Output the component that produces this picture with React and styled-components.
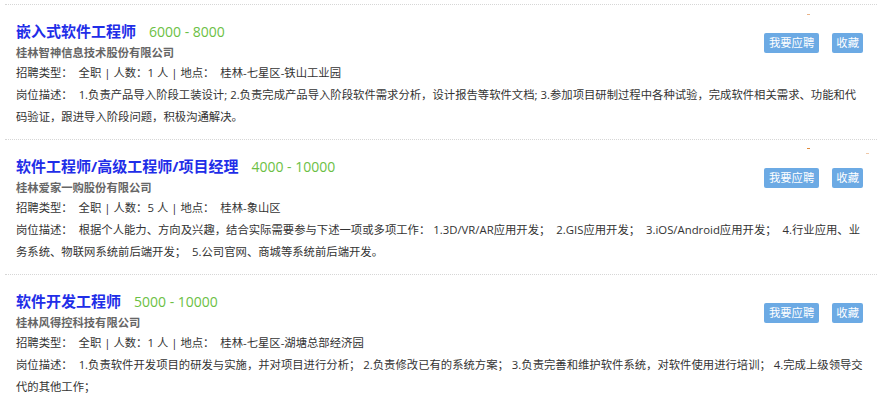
import React from 'react'
import styled, { createGlobalStyle } from 'styled-components'

const GlobalStyle = createGlobalStyle`
  body {
    margin: 0;
    background: #fff;
    font-family: "Open Sans", "Noto Sans CJK SC", sans-serif;
    color: #333;
  }
`

const JobList = styled.ul`
  list-style: none;
  margin: 0;
  padding: 4px 0 0 5px;
  width: 872px;
`

const JobItem = styled.li`
  position: relative;
  border-top: 1px dotted #d6d6d6;
  padding: 15px 12px 11px 11px;
`

const Head = styled.div`
  display: flex;
  justify-content: space-between;
  align-items: flex-start;
`

const Title = styled.h2`
  margin: 0;
  display: flex;
  align-items: baseline;
  line-height: 23px;
  font-size: 15px;
  font-weight: bold;
  color: #1f2ee8;
`

const Salary = styled.span`
  margin-left: 13px;
  font-size: 14px;
  font-weight: normal;
  color: #6cbf45;
`

const Company = styled.h3`
  margin: 0;
  line-height: 19px;
  font-size: 11.3px;
  font-weight: bold;
  color: #666;
`

const Actions = styled.div`
  display: flex;
  gap: 13px;
  margin-top: 13px;
  margin-right: 2px;
`

const ActionButton = styled.button`
  height: 20px;
  padding: 0 ${(p) => (p.$wide ? '5px' : '4px')};
  border: 0;
  border-radius: 2px;
  background: #6caae4;
  color: #fff;
  font-family: inherit;
  font-size: 11.35px;
  line-height: 20px;
  cursor: pointer;
`

const Line = styled.p`
  margin: 0;
  line-height: 22px;
  font-size: 11.35px;
  color: #333;
`

const Mark = styled.i`
  position: absolute;
  top: ${(p) => p.$top}px;
  left: ${(p) => p.$left}px;
  width: 3px;
  height: 1px;
  background: ${(p) => p.$color};
`

const jobs = [
  {
    title: '嵌入式软件工程师',
    salary: '6000 - 8000',
    company: '桂林智神信息技术股份有限公司',
    count: 1,
    place: '桂林-七星区-铁山工业园',
    desc: '1.负责产品导入阶段工装设计; 2.负责完成产品导入阶段软件需求分析，设计报告等软件文档; 3.参加项目研制过程中各种试验，完成软件相关需求、功能和代码验证，跟进导入阶段问题，积极沟通解决。',
    marks: [{ top: 9, left: 802, color: '#e9b48a' }],
  },
  {
    title: '软件工程师/高级工程师/项目经理',
    salary: '4000 - 10000',
    company: '桂林爱家一购股份有限公司',
    count: 5,
    place: '桂林-象山区',
    desc: '根据个人能力、方向及兴趣，结合实际需要参与下述一项或多项工作： 1.3D/VR/AR应用开发；\u00a0 2.GIS应用开发；\u00a0 3.iOS/Android应用开发；\u00a0 4.行业应用、业务系统、物联网系统前后端开发；\u00a0 5.公司官网、商城等系统前后端开发。',
    marks: [
      { top: 8, left: 802, color: '#e08a3a' },
      { top: 13, left: 861, color: '#f0c8a8' },
    ],
  },
  {
    title: '软件开发工程师',
    salary: '5000 - 10000',
    company: '桂林风得控科技有限公司',
    count: 1,
    place: '桂林-七星区-湖塘总部经济园',
    desc: '1.负责软件开发项目的研发与实施，并对项目进行分析； 2.负责修改已有的系统方案； 3.负责完善和维护软件系统，对软件使用进行培训； 4.完成上级领导交代的其他工作；',
    marks: [],
  },
]

const App = () => {
  return (
    <>
      <GlobalStyle />
      <JobList>
        {jobs.map((job) => (
          <JobItem key={job.title}>
            {job.marks.map((m, i) => (
              <Mark key={i} $top={m.top} $left={m.left} $color={m.color} />
            ))}
            <Head>
              <div>
                <Title>
                  {job.title}
                  <Salary>{job.salary}</Salary>
                </Title>
                <Company>{job.company}</Company>
              </div>
              <Actions>
                <ActionButton $wide>我要应聘</ActionButton>
                <ActionButton>收藏</ActionButton>
              </Actions>
            </Head>
            <Line>
              招聘类型：&nbsp; 全职 | 人数：{job.count} 人 | 地点：&nbsp; {job.place}
            </Line>
            <Line>岗位描述：&nbsp; {job.desc}</Line>
          </JobItem>
        ))}
      </JobList>
    </>
  )
}

export default App
